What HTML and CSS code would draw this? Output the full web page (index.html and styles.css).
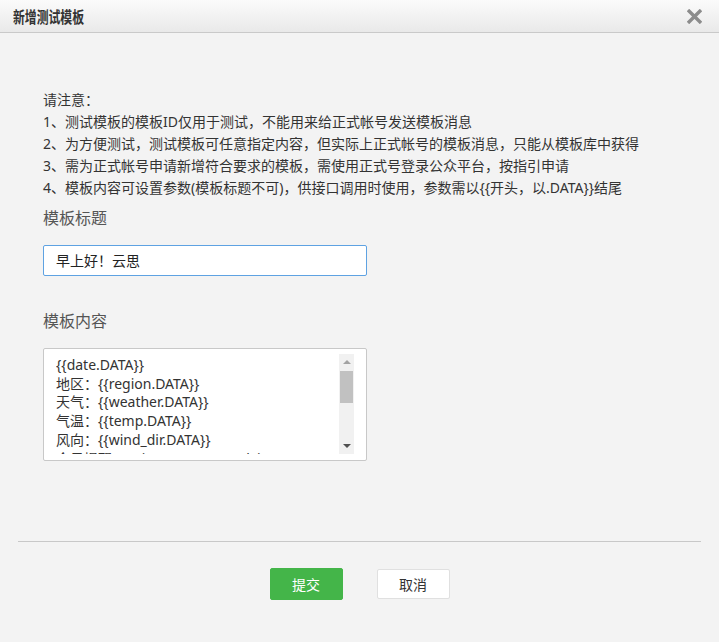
FILE: index.html
```html
<!DOCTYPE html>
<html lang="zh-CN">
<head>
<meta charset="utf-8">
<title>新增测试模板</title>
<link rel="stylesheet" href="styles.css">
</head>
<body>
<div class="dialog">
  <div class="header">
    <span class="title">新增测试模板</span>
    <svg class="close" width="15" height="15" viewBox="0 0 15 15"><path d="M2.2 2.2L12.8 12.8M12.8 2.2L2.2 12.8" stroke="#8c8c8c" stroke-width="3.4" stroke-linecap="square"/></svg>
  </div>
  <div class="body">
    <div class="notice">
      <div>请注意：</div>
      <div>1、测试模板的模板ID仅用于测试，不能用来给正式帐号发送模板消息</div>
      <div>2、为方便测试，测试模板可任意指定内容，但实际上正式帐号的模板消息，只能从模板库中获得</div>
      <div>3、需为正式帐号申请新增符合要求的模板，需使用正式号登录公众平台，按指引申请</div>
      <div>4、模板内容可设置参数(模板标题不可)，供接口调用时使用，参数需以{{开头，以.DATA}}结尾</div>
    </div>
    <div class="label label-title">模板标题</div>
    <div class="input">早上好！云思</div>
    <div class="label label-content">模板内容</div>
    <div class="textarea">
      <div class="ta-text">
        <div>{{date.DATA}}</div>
        <div>地区：{{region.DATA}}</div>
        <div>天气：{{weather.DATA}}</div>
        <div>气温：{{temp.DATA}}</div>
        <div>风向：{{wind_dir.DATA}}</div>
        <div>今日提醒：{{tips.DATA}}，{{advice.DATA}}</div>
      </div>
      <div class="scrollbar">
        <div class="arrow arrow-up"></div>
        <div class="track"><div class="thumb"></div></div>
        <div class="arrow arrow-down"></div>
      </div>
    </div>
  </div>
  <div class="divider"></div>
  <div class="footer">
    <div class="btn btn-primary">提交</div>
    <div class="btn btn-default">取消</div>
  </div>
</div>
</body>
</html>
```
FILE: styles.css
```css
html, body {
  margin: 0;
  padding: 0;
  background: #f3f3f3;
}
body {
  font-family: "Noto Sans", "Noto Sans CJK SC", sans-serif;
  color: #333;
}
.dialog {
  width: 719px;
  height: 642px;
  background: #f3f3f3;
}
.header {
  height: 33px;
  box-sizing: border-box;
  border-bottom: 1px solid #c9c9c9;
  background: linear-gradient(#fbfbfb, #e9e9e9);
  display: flex;
  align-items: center;
  justify-content: space-between;
  padding: 0 17px 0 13px;
}
.title {
  display: inline-block;
  font-family: "Noto Sans CJK SC", sans-serif;
  font-size: 16px;
  font-weight: bold;
  color: #333;
  line-height: 33px;
  transform: scaleX(0.74);
  transform-origin: left center;
}
.close {
  display: block;
}
.body {
  padding: 56px 43px 0 43px;
}
.notice {
  font-size: 14px;
  line-height: 22px;
  color: #333;
}
.label {
  font-family: "Noto Sans CJK SC", sans-serif;
  font-size: 16px;
  line-height: 22px;
  color: #555;
}
.label-title {
  margin-top: 7px;
}
.label-content {
  margin-top: 33px;
}
.input {
  margin-top: 17px;
  width: 324px;
  height: 31px;
  box-sizing: border-box;
  border: 1px solid #5ea2e2;
  border-radius: 2px;
  background: #fff;
  font-size: 14px;
  line-height: 29px;
  padding: 0 12px;
  color: #222;
}
.textarea {
  margin-top: 17px;
  width: 324px;
  height: 113px;
  box-sizing: border-box;
  border: 1px solid #c8c8c8;
  border-radius: 2px;
  background: #fff;
  padding: 5px 12px 6px 12px;
  display: flex;
}
.ta-text {
  flex: 1;
  overflow: hidden;
  font-size: 14px;
  line-height: 18.7px;
  color: #333;
  white-space: nowrap;
  padding-top: 2px;
}
.scrollbar {
  width: 15px;
  display: flex;
  flex-direction: column;
  background: #f1f1f1;
}
.arrow {
  height: 16px;
  display: flex;
  align-items: center;
  justify-content: center;
}
.arrow-up::before {
  content: "";
  border-left: 4px solid transparent;
  border-right: 4px solid transparent;
  border-bottom: 4px solid #a3a3a3;
}
.arrow-down::before {
  content: "";
  border-left: 4px solid transparent;
  border-right: 4px solid transparent;
  border-top: 4px solid #505050;
}
.track {
  flex: 1;
  padding: 0 1px;
}
.thumb {
  margin-top: 1px;
  height: 32px;
  background: #c1c1c1;
}
.divider {
  margin: 80px 18px 0 18px;
  height: 1px;
  background: #c8c8c8;
}
.footer {
  display: flex;
  justify-content: center;
  gap: 34px;
  padding-top: 26px;
}
.btn {
  height: 32px;
  box-sizing: border-box;
  font-family: "Noto Sans CJK SC", sans-serif;
  font-size: 14px;
  display: flex;
  align-items: center;
  justify-content: center;
  border-radius: 2px;
}
.btn-primary {
  width: 73px;
  background: #44b549;
  color: #fff;
  border: 1px solid #44b549;
}
.btn-default {
  width: 73px;
  margin-top: 1px;
  height: 30px;
  background: #fff;
  color: #333;
  border: 1px solid #e0e0e0;
}
```
